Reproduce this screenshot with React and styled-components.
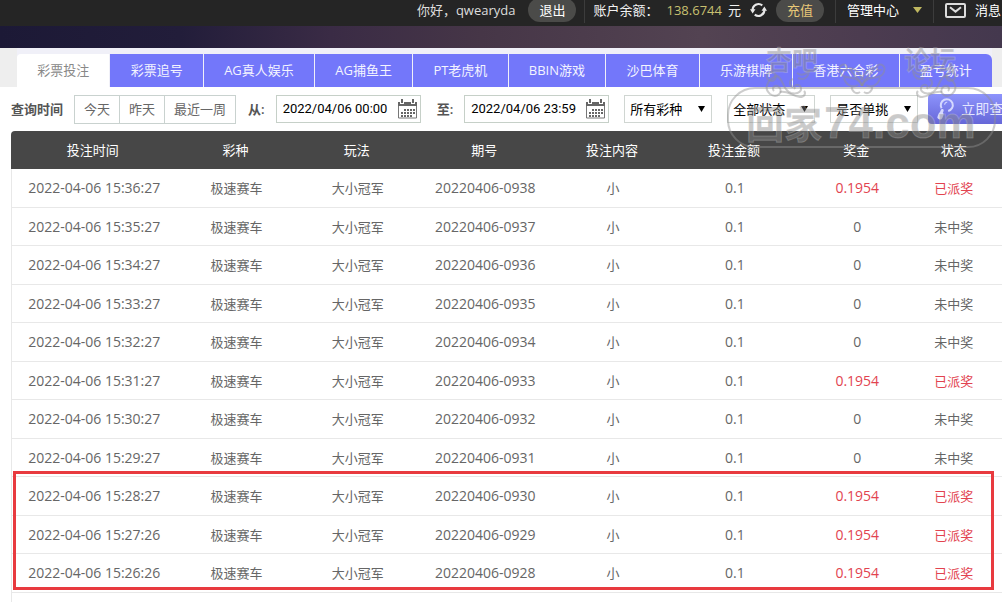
import React from 'react';
import styled, {createGlobalStyle} from 'styled-components';

const GlobalStyle = createGlobalStyle`
  * {
    box-sizing: border-box;
  }

  body {
    margin: 0;
    overflow: hidden;
    background: #fff;
    color: #555;
    font-family: "Open Sans", "Noto Sans CJK SC", sans-serif;
    font-size: 13px;
    line-height: 20px;
  }

  button, input, select {
    margin: 0;
    font: inherit;
    color: inherit;
  }
`

const Page = styled.div`
  position: relative;
  min-height: 100vh;
  white-space: nowrap;
`

const TopBar = styled.header`
  display: flex;
  justify-content: flex-end;
  align-items: center;
  height: 26px;
  padding: 0 1px 6px 0;
  background: #252525;
  color: #f2f2f2;
`

const UserName = styled.span`
  margin-right: 13px;
  color: #ddd;
`

const Pill = styled.button`
  height: 24px;
  padding: 0 11px;
  border: none;
  border-radius: 12px;
  background: #4b4b49;
  color: ${({$gold}) => $gold ? '#e8c878' : '#fff'};
  cursor: pointer;
`

const Separator = styled.span`
  width: 1px;
  height: 26px;
  margin: 0 ${({$wide}) => $wide ? '11px' : '8px'};
  background: #3c3c3c;
`

const Amount = styled.span`
  margin: 0 6px 0 8px;
  color: #c8c070;
`

const IconButton = styled.button`
  display: flex;
  padding: 0;
  margin: 0 ${({$space}) => $space || '0'};
  border: none;
  background: none;
  cursor: pointer;
`

const TopLink = styled.a`
  display: flex;
  align-items: center;
  gap: ${({$gap}) => $gap};
  color: #fff;
  text-decoration: none;
`

const Banner = styled.div`
  height: 22px;
  background: linear-gradient(90deg, #1c1936 0%, #221d3a 18%, #3a2b45 33%, #463647 48%, #534352 70%, #4c3c50 86%, #44384e 100%);
`

const TabStrip = styled.nav`
  display: flex;
  gap: 1px;
  padding: 6px 10px 0 17px;
  background: linear-gradient(90deg, #eee 17px, #f0f0f8 17px, #f0f0f8 calc(100% - 10px), #eee 0);
`

const Tab = styled.a`
  flex: 1 0 auto;
  padding: 0 19px;
  line-height: 33px;
  text-align: center;
  text-decoration: none;
  background: ${({$active}) => $active ? '#fff' : '#7377fa'};
  color: ${({$active}) => $active ? '#888' : '#f4f4ff'};

  &:first-child {
    border-top-left-radius: 4px;
  }

  &:last-child {
    border-top-right-radius: 6px;
  }
`

const Filters = styled.form`
  display: flex;
  align-items: center;
  gap: 11px;
  height: 44px;
  padding-left: 11px;

  > * {
    flex-shrink: 0;
  }
`

const FilterTitle = styled.span`
  font-weight: 600;
`

const FilterLabel = styled.label`
  font-weight: 600;
  padding-left: ${({$indent}) => $indent ? '5px' : '1px'};
`

const RangeGroup = styled.div`
  display: flex;
  border: 1px solid #c9d2cf;
`

const RangeButton = styled.button`
  height: 27px;
  padding: 0 9px;
  border: none;
  background: #fff;
  color: #666;
  cursor: pointer;

  & + & {
    border-left: 1px solid #c9d2cf;
  }
`

const DateBox = styled.div`
  display: flex;
  align-items: center;
  justify-content: space-between;
  width: 145px;
  height: 28px;
  padding: 0 3px 0 6px;
  border: 1px solid #c6d0c8;
`

const DateInput = styled.input`
  width: 108px;
  padding: 0;
  border: none;
  outline: none;
  background: none;
  color: #000;
  font-family: Roboto, "Noto Sans CJK SC", sans-serif;
`

const SelectGroup = styled.div`
  display: flex;
  gap: 15px;
  padding-left: 4px;
`

const SelectBox = styled.div`
  display: grid;
  align-items: center;
  width: 88px;
  height: 28px;
  border: 1px solid #d0d6d2;

  select, svg {
    grid-area: 1 / 1;
  }

  svg {
    justify-self: end;
    margin-right: 6px;
    pointer-events: none;
  }
`

const Select = styled.select`
  width: 100%;
  height: 26px;
  padding: 0 0 0 5px;
  border: none;
  appearance: none;
  background: none;
  color: #000;
`

const SearchButton = styled.button`
  display: flex;
  align-items: center;
  gap: 6px;
  height: 30px;
  padding: 0 12px 0 9px;
  margin-left: -1px;
  border: none;
  border-radius: 4px;
  background: linear-gradient(#8d93fc, #6667d8);
  color: #e4e6ff;
  font-size: 14px;
  cursor: pointer;
`

const Results = styled.section`
  position: relative;
  margin-left: 11px;
`

const Table = styled.table`
  width: 100%;
  table-layout: fixed;
  border-spacing: 0;
  text-align: center;

  tr > :last-child {
    padding-right: 14px;
  }
`

const HeadCell = styled.th`
  width: ${({$width}) => $width};
  height: 38px;
  padding: 0 2px 0 0;
  background: #474747;
  color: #fff;
  font-weight: 400;

  &:first-child {
    border-top-left-radius: 4px;
  }
`

const Row = styled.tr`
  height: ${({$tall}) => $tall ? '39px' : '38px'};
`

const Cell = styled.td`
  padding: 0;
  border-bottom: 1px solid #e8e8e8;
  color: ${({$won}) => $won ? '#e2434f' : '#666'};
  font-size: ${({$digits}) => $digits ? '14px' : '13px'};

  &:first-child {
    border-left: 1px solid #e8e8e8;
  }
`

const TableEnd = styled.div`
  height: 9px;
  border-left: 1px solid #e8e8e8;
`

const Highlight = styled.div`
  position: absolute;
  left: 2px;
  right: 8px;
  bottom: 12px;
  height: 119px;
  border: 3px solid #e83a3f;
  pointer-events: none;
`

const Watermark = styled.svg`
  position: absolute;
  top: 44px;
  right: 4px;
  pointer-events: none;

  text {
    font-weight: 700;
    font-family: "Liberation Sans", "Noto Sans CJK SC", sans-serif;
  }
`

const RefreshIcon = () => (
    <svg width="17" height="18" viewBox="0 0 18 18" fill="none" stroke="#e8e8e8" strokeWidth="2.2">
        <path d="M2.8 9.5A6.3 6.3 0 0 1 13 4.1"/>
        <path d="M15.2 8.5A6.3 6.3 0 0 1 5 13.9"/>
        <path d="M0 8.2h5.8L2.8 12.6zM12.2 9.8H18L15.2 5.4z" fill="#e8e8e8" stroke="none"/>
    </svg>
)

const MailIcon = () => (
    <svg width="21" height="15" viewBox="0 0 21 15" fill="none" stroke="#dcdcdc" strokeWidth="2">
        <rect x="1" y="1" width="19" height="13" rx="1"/>
        <path d="M5 4.2l5.5 4.4L16 4.2"/>
    </svg>
)

const CalendarIcon = () => (
    <svg width="19" height="20" viewBox="0 0 19 20" fill="#666">
        <path d="M0 3h2v2h4V3h7v2h4V3h2v4H0z"/>
        <path d="M3 0h2v4H3zM14 0h2v4h-2z"/>
        <path d="M.5 7v12h18V7" fill="none" stroke="#777"/>
        <path d="M6 10h2v2H6zM9 10h2v2H9zM12 10h2v2h-2zM15 10h2v2h-2zM3 13h2v2H3zM6 13h2v2H6zM9 13h2v2H9zM12 13h2v2h-2zM15 13h2v2h-2zM3 16h2v2H3zM6 16h2v2H6zM9 16h2v2H9zM12 16h2v2h-2z"/>
    </svg>
)

const SearchIcon = () => (
    <svg width="18" height="24" viewBox="0 0 18 24" fill="none" stroke="#d5d8ff">
        <path d="M4.6 11.2A6 6 0 1 1 11.2 14" strokeWidth="2"/>
        <path d="M7.5 7.6a3.2 3.2 0 0 1 2.7-2.6" strokeWidth="1.2"/>
        <path d="M5.2 13.5l-1 2.5" strokeWidth="3" strokeLinecap="round"/>
        <path d="M4 17.5l-1 2.5" strokeWidth="5" strokeLinecap="round"/>
    </svg>
)

const Arrow = ({color, size}) => (
    <svg width={size} height="6" viewBox="0 0 8 6" preserveAspectRatio="none" fill={color}>
        <path d="M0 0h8L4 6z"/>
    </svg>
)

// side scroll: two curls joined by a stem, with a leaf sweeping inwards
const Scroll = ({transform}) => (
    <g transform={transform}>
        <path d="M11 8C4-1-3 8 3 12c5 3 9-3 5-5"/>
        <path d="M11 8c-9 3-14 12-7 18 7 5 14-2 9-7-4-3-8 1-5 4"/>
        <path d="M11 8c7 3 5 14 14 17 8 2 12-3 9-7-3-3-7 0-5 3"/>
        <path d="M14 24c7-2 12 4 20 5 5 0 6-4 4-6M27 11c-4 1-4 7 0 8M31 5c4 3 8 2 12-2-1 8-6 9-11 7"/>
    </g>
)

// half of the centre ornament, mirrored for the other half
const Crest = ({transform}) => (
    <g transform={transform}>
        <path d="M24 28C18 14 6 24 2 14-1 6 9 4 9 10c0 3-4 3-4 1"/>
        <path d="M24 28c-1-8-10-10-12-18 6 1 11 6 12 12M6 20c2 8 9 10 14 7M14 28c-1 5 4 9 8 6"/>
    </g>
)

const Field = ({id, label, indent, value}) => (
    <>
        <FilterLabel htmlFor={id} $indent={indent}>{label}</FilterLabel>
        <DateBox>
            <DateInput id={id} type="text" defaultValue={value}/>
            <IconButton type="button">
                <CalendarIcon/>
            </IconButton>
        </DateBox>
    </>
)

const Index = () => {
    return (
        <Page>
            <GlobalStyle/>
            <TopBar>
                <UserName>你好，qwearyda</UserName>
                <Pill>退出</Pill>
                <Separator/>
                <span>账户余额：</span>
                <Amount>138.6744</Amount>
                <span>元</span>
                <IconButton $space="9px">
                    <RefreshIcon/>
                </IconButton>
                <Pill $gold>充值</Pill>
                <Separator $wide/>
                <TopLink href="#" $gap="14px">
                    管理中心
                    <Arrow color="#c0b860" size={9}/>
                </TopLink>
                <Separator $wide/>
                <TopLink href="#" $gap="9px">
                    <MailIcon/>
                    消息
                </TopLink>
            </TopBar>
            <Banner/>
            <TabStrip>
                {TABS.map((t, i) => <Tab key={t} href="#" $active={i === 0}>{t}</Tab>)}
            </TabStrip>
            <Filters>
                <FilterTitle>查询时间</FilterTitle>
                <RangeGroup>
                    {RANGES.map((r) => <RangeButton key={r} type="button">{r}</RangeButton>)}
                </RangeGroup>
                <Field id="from" label="从:" value="2022/04/06 00:00"/>
                <Field id="to" label="至:" value="2022/04/06 23:59" indent/>
                <SelectGroup>
                    {SELECTS.map((s) => (
                        <SelectBox key={s}>
                            <Select aria-label={s}>
                                <option>{s}</option>
                            </Select>
                            <Arrow color="#000" size={7}/>
                        </SelectBox>
                    ))}
                </SelectGroup>
                <SearchButton type="button">
                    <SearchIcon/>
                    立即查询
                </SearchButton>
            </Filters>
            <Results>
                <Table>
                    <thead>
                        <tr>
                            {COLUMNS.map((c) => <HeadCell key={c.label} $width={c.width}>{c.label}</HeadCell>)}
                        </tr>
                    </thead>
                    <tbody>
                        {BETS.map((b, i) => (
                            <Row key={b.no} $tall={i % 2 === 0}>
                                <Cell $digits>2022-04-06 {b.time}</Cell>
                                <Cell>极速赛车</Cell>
                                <Cell>大小冠军</Cell>
                                <Cell $digits>20220406-{b.no}</Cell>
                                <Cell>小</Cell>
                                <Cell $digits>0.1</Cell>
                                <Cell $digits $won={b.won}>{b.won ? '0.1954' : '0'}</Cell>
                                <Cell $won={b.won}>{b.won ? '已派奖' : '未中奖'}</Cell>
                            </Row>
                        ))}
                    </tbody>
                </Table>
                <TableEnd/>
                <Highlight/>
            </Results>
            <Watermark width="272" height="106" viewBox="0 0 272 106">
                <g fill="none" stroke="#909090" strokeOpacity="0.45" strokeWidth="2">
                    <rect x="2" y="44" width="267" height="59" rx="27"/>
                    <Scroll transform="translate(40 24)"/>
                    <Scroll transform="translate(230 24) scale(-1 1)"/>
                    <Crest transform="translate(112 14)"/>
                    <Crest transform="translate(160 14) scale(-1 1)"/>
                </g>
                <g fill="#888" fillOpacity="0.45" stroke="#fff" strokeOpacity="0.2">
                    <text x="40" y="26" fontSize="26">杏吧</text>
                    <text x="178" y="26" fontSize="26">论坛</text>
                    <text x="20" y="94" fontSize="38">回家</text>
                    <text x="98" y="94" fontSize="44">74.com</text>
                </g>
            </Watermark>
        </Page>
    );
};

const TABS = ['彩票投注', '彩票追号', 'AG真人娱乐', 'AG捕鱼王', 'PT老虎机', 'BBIN游戏', '沙巴体育', '乐游棋牌', '香港六合彩', '盈亏统计']

const RANGES = ['今天', '昨天', '最近一周']

const SELECTS = ['所有彩种', '全部状态', '是否单挑']

const COLUMNS = [
    {label: '投注时间', width: '16.7%'},
    {label: '彩种', width: '12.1%'},
    {label: '玩法', width: '12.4%'},
    {label: '期号', width: '13.3%'},
    {label: '投注内容', width: '12.5%'},
    {label: '投注金额', width: '12.1%'},
    {label: '奖金', width: '12.6%'},
    {label: '状态', width: 'auto'},
]

const BETS = [
    {time: '15:36:27', no: '0938', won: true},
    {time: '15:35:27', no: '0937', won: false},
    {time: '15:34:27', no: '0936', won: false},
    {time: '15:33:27', no: '0935', won: false},
    {time: '15:32:27', no: '0934', won: false},
    {time: '15:31:27', no: '0933', won: true},
    {time: '15:30:27', no: '0932', won: false},
    {time: '15:29:27', no: '0931', won: false},
    {time: '15:28:27', no: '0930', won: true},
    {time: '15:27:26', no: '0929', won: true},
    {time: '15:26:26', no: '0928', won: true},
]

export default Index;
